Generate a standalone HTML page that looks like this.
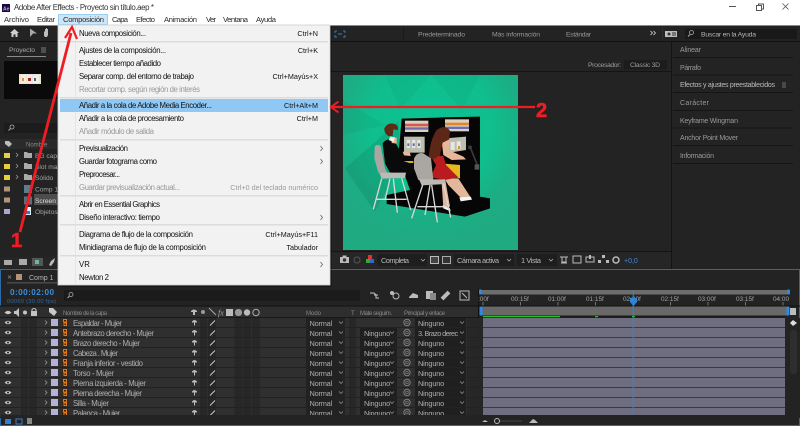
<!DOCTYPE html>
<html lang="es"><head><meta charset="utf-8"><title>Adobe After Effects</title>
<style>
html,body{margin:0;padding:0;width:800px;height:426px;overflow:hidden;background:#1e1e1e}
svg{display:block;filter:blur(.3px)}
text{font-family:"Liberation Sans",sans-serif;font-size:7.8px;fill:#111}
.d{fill:#9a9a9a}
.s{fill:#9a9a9a}
.w{fill:#b8b8b8}
.r{text-anchor:end;font-size:7.2px}
.n{font-size:7.8px;fill:#adadad}
.dd{font-size:7.4px;letter-spacing:-.22px;fill:#adadad}
.h{font-size:6px;fill:#8a8a8a}
.t{font-size:6.6px;fill:#a3a3a3}
.m{font-size:7.6px;fill:#2a2a2a}
.rl{font-size:6.4px;fill:#a5a5a5}
</style></head><body>
<svg width="800" height="426" viewBox="0 0 800 426" xmlns="http://www.w3.org/2000/svg">
<defs>
<g id="row">
<rect x="0" y="0" width="478" height="9" fill="#2f2f2f"/>
<rect x="0" y="9" width="478" height="1" fill="#222"/>
<path d="M4.500 4.500q3.500-3.500 7 0q-3.500 3.500-7 0z" fill="#c8c8c8"/><circle cx="8" cy="4.500" r="1" fill="#222"/>
<rect x="21" y="0" width="7" height="9" fill="#272727"/><rect x="29" y="0" width="8" height="9" fill="#272727"/>
<path d="M45 2.500l2 2-2 2" fill="none" stroke="#9a9a9a" stroke-width=".8"/>
<rect x="51" y="1" width="7" height="7" fill="#b5b0d8"/>
<rect x="62" y="0.500" width="6" height="8" fill="#3a2412"/><path d="M63.500 1.500h3v2.500h-3zM64 5h2.500v2.500H64z" fill="none" stroke="#e07a1c" stroke-width="1"/>
<path d="M192 3.500q2.500-3 5 0v1h-5z M194 4.500h1v3h-1z" fill="#bcbcbc"/>
<rect x="200" y="0" width="7" height="9" fill="#272727"/><rect x="208" y="0" width="8" height="9" fill="#272727"/>
<path d="M210 7.500l5-5" stroke="#cfcfcf" stroke-width=".9"/>
<rect x="234.500" y="0" width="8" height="9" fill="#272727"/><rect x="243" y="0" width="8" height="9" fill="#272727"/><rect x="252" y="0" width="8" height="9" fill="#272727"/>
<rect x="306" y="0" width="39" height="9" fill="#222"/>
<path d="M339 3.500l2 2 2-2" fill="none" stroke="#999" stroke-width=".7"/>
<rect x="349" y="0" width="7" height="9" fill="#272727"/>
<circle cx="407" cy="4.500" r="3.200" fill="none" stroke="#7f7f7f" stroke-width="1"/><circle cx="407" cy="4.500" r="1.300" fill="none" stroke="#7f7f7f" stroke-width=".7"/>
<rect x="415" y="0" width="51" height="9" fill="#1f1f1f"/>
<path d="M460 3.500l2 2 2-2" fill="none" stroke="#999" stroke-width=".7"/>
<rect x="467" y="0" width="11" height="9" fill="#272727"/>
<rect x="478" y="0" width="5" height="10" fill="#262626"/>
<rect x="483" y="0" width="302" height="9" fill="#6f6d80"/>
<rect x="483" y="9" width="302" height="1" fill="#3a3a3f"/>
<rect x="785" y="0" width="15" height="10" fill="#232323"/>
</g>
<g id="mate"><rect x="360" y="0" width="37" height="9" fill="#1f1f1f"/><path d="M390 3.500l2 2 2-2" fill="none" stroke="#999" stroke-width=".7"/></g>
<radialGradient id="bg" gradientUnits="userSpaceOnUse" cx="431" cy="128" r="115">
<stop offset="0" stop-color="#0cc492"/><stop offset=".55" stop-color="#10bd8d"/><stop offset=".8" stop-color="#1cad84"/><stop offset="1" stop-color="#20aa82"/>
</radialGradient>
</defs>

<!-- title bar -->
<rect width="800" height="25" fill="#fff"/>
<rect x="2" y="4" width="8" height="8" fill="#1d0b3d"/>
<text x="3" y="10.500" style="font-size:5px;fill:#b6a5f5;font-weight:bold">Ae</text>
<text x="14" y="10" style="font-size:7.900px;fill:#333" textLength="140">Adobe After Effects - Proyecto sin título.aep *</text>
<path d="M729 6.500h7" stroke="#555" stroke-width="1"/>
<rect x="758.500" y="4" width="5" height="5" fill="none" stroke="#555"/><rect x="756.500" y="5.500" width="5" height="5" fill="#fff" stroke="#555"/>
<path d="M782.500 3.500l6 6m0-6l-6 6" stroke="#555" stroke-width=".8"/>
<rect x="58.500" y="14.500" width="49" height="10" fill="#cde6f7" stroke="#9bcdf0"/>
<text x="4" y="22" class="m" textLength="25">Archivo</text>
<text x="37" y="22" class="m" textLength="18">Editar</text>
<text x="63" y="22" class="m" textLength="41">Composición</text>
<text x="112" y="22" class="m" textLength="16">Capa</text>
<text x="136" y="22" class="m" textLength="19">Efecto</text>
<text x="164" y="22" class="m" textLength="33">Animación</text>
<text x="206" y="22" class="m" textLength="10">Ver</text>
<text x="223" y="22" class="m" textLength="25">Ventana</text>
<text x="256" y="22" class="m" textLength="20">Ayuda</text>

<!-- app -->
<rect x="0" y="25" width="800" height="401" fill="#1b1b1b"/>
<rect x="0" y="25" width="800" height="1" fill="#888"/>
<rect x="0" y="26" width="800" height="15" fill="#232323"/>
<rect x="0" y="41" width="800" height="1" fill="#111"/>
<path d="M10 33l4.500-4 4.500 4h-1.500v4h-2v-2.500h-2V37h-2v-4z" fill="#cfcfcf"/>
<path d="M30 28.500l7 5h-4l-3 3.500z" fill="#a8a8a8"/>
<path d="M44 36v-5l1 1v-3h1v2.500V28h1v2.500V29h1v6l-1 2h-2z" fill="#bdbdbd"/>
<path d="M335 31h2m-2 0v2m8-2h2m0 0v2m-10 2v2h2m6 0h2v-2M338 34h4" stroke="#3b7fbf" stroke-width=".9" fill="none"/>
<rect x="403" y="27" width=".8" height="13" fill="#191919"/>
<text x="418" y="36.500" class="s" textLength="47" style="font-size:6.800px">Predeterminado</text>
<text x="492" y="36.500" class="s" textLength="48" style="font-size:6.800px">Más información</text>
<text x="566" y="36.500" class="s" textLength="25" style="font-size:6.800px">Estándar</text>
<path d="M650.500 31l2 2-2 2m3-4l2 2-2 2" fill="none" stroke="#bbb" stroke-width=".9"/>
<rect x="662" y="27" width=".8" height="12" fill="#333"/>
<rect x="665" y="31" width="12" height="6" fill="#bdbdbd"/><circle cx="669" cy="34" r="1.500" fill="#333"/><rect x="672" y="32.500" width="4" height="1" fill="#333"/><rect x="672" y="34.500" width="4" height="1" fill="#333"/>
<rect x="685" y="29" width="112" height="10" fill="#191919"/>
<circle cx="691.500" cy="32.500" r="2" fill="none" stroke="#aaa" stroke-width=".8"/><path d="M690 34.500l-2 2" stroke="#aaa"/>
<text x="701" y="36.500" class="w" textLength="55" style="font-size:6.800px">Buscar en la Ayuda</text>

<!-- project panel -->
<rect x="0" y="42" width="58" height="227" fill="#232323"/>
<text x="9" y="52" textLength="26" style="font-size:6.800px;fill:#a5a5a5">Proyecto</text>
<path d="M41 48h5m-5 2h5m-5 2h5" stroke="#999" stroke-width=".8"/>
<rect x="7" y="56" width="39" height="1" fill="#8a8a8a"/>
<rect x="4" y="61" width="54" height="38" fill="#0a0a0a"/>
<rect x="19" y="74" width="22" height="10" fill="#e8e4d8"/>
<rect x="21" y="75" width="5" height="8" fill="#f4f0e0"/><rect x="27" y="75" width="5" height="8" fill="#f3ede0"/><rect x="33" y="75" width="6" height="8" fill="#f4f0e0"/>
<rect x="22" y="78" width="2" height="3" fill="#d99828"/><rect x="28" y="78" width="3" height="3" fill="#a8231f"/><rect x="34" y="78" width="2" height="3" fill="#4a5aa0"/>
<rect x="4" y="123" width="54" height="10" fill="#1c1c1c"/>
<circle cx="12" cy="127" r="2" fill="none" stroke="#aaa" stroke-width=".8"/><path d="M10.500 128.500l-2 2" stroke="#aaa"/>
<rect x="0" y="139" width="58" height="10" fill="#2b2b2b"/>
<path d="M5 141h4l3 3-3 3-4-3z" fill="#bdbdbd"/>
<text x="26" y="146.500" class="h">Nombre</text>
<rect x="4" y="153" width="6" height="5" fill="#e6cf3c"/><rect x="4" y="164" width="6" height="5" fill="#e6cf3c"/><rect x="4" y="175" width="6" height="5" fill="#e6cf3c"/>
<rect x="4" y="186.500" width="6" height="5" fill="#b0957a"/><rect x="4" y="197.500" width="6" height="5" fill="#b0957a"/><rect x="4" y="209" width="6" height="5" fill="#a9a5d4"/>
<path d="M16 153l2 2-2 2M16 164l2 2-2 2M16 175l2 2-2 2" fill="none" stroke="#999" stroke-width=".8"/>
<path d="M24 152h3l1 1h4v5h-8z M24 163h3l1 1h4v5h-8z M24 174h3l1 1h4v5h-8z" fill="#aaa"/>
<rect x="34" y="194" width="24" height="11" fill="#4d4d4d"/>
<rect x="24" y="185" width="8" height="8" fill="#5a7d90"/><rect x="24" y="196.500" width="8" height="8" fill="#5a6d7c"/>
<rect x="25" y="207" width="6" height="8" fill="#e8eef4"/><rect x="26" y="211" width="4" height="3" fill="#2d78c8"/>
<text x="35" y="158" class="t">BG capa</text><text x="35" y="169" class="t">Slot ma</text><text x="35" y="180" class="t">Sólido</text><text x="35" y="191.500" class="t">Comp 1</text><text x="35" y="203" class="t" style="fill:#ddd">Screen</text><text x="35" y="214" class="t">Objetos</text>
<rect x="0" y="257" width="58" height="11" fill="#262626"/>
<rect x="4" y="260" width="8" height="5" fill="#aaa"/><rect x="19" y="259" width="8" height="6" fill="#aaa"/><rect x="32" y="258" width="11" height="8" fill="#555"/><rect x="35" y="260" width="4" height="4" fill="#6b9"/>
<path d="M49 265l2-4 4-3-1 4-3 4z" fill="#bbb"/>

<!-- viewer panel -->
<rect x="330" y="42" width="341" height="227" fill="#232323"/>
<rect x="330" y="71" width="341" height="1" fill="#141414"/>
<text x="588" y="67" class="s" textLength="33" style="font-size:6.800px">Procesador:</text>
<rect x="624" y="60" width="43" height="9.500" fill="#1c1c1c"/>
<text x="630" y="67" class="s" textLength="30" style="font-size:6.800px">Classic 3D</text>

<!-- composition -->
<rect x="343" y="75" width="175" height="175" fill="url(#bg)"/>
<path d="M431 75L385 75L400 110ZM431 75L480 75L462 110ZM343 100L343 135L385 125Z" fill="#000" opacity=".035"/>
<g transform="translate(330 100) scale(.33333)">
<path d="M45 205L205 65L215 190L135 335Z" fill="#0b5a45" opacity=".16"/>
<!-- machine -->
<path d="M215 56L325 53L332 52L450 50V290L480 295V325L405 350L170 312V285L240 270L205 170Z" fill="#060606"/>
<rect x="225" y="62" width="70" height="34" fill="#ddd0bc"/><rect x="225" y="71" width="70" height="8" fill="#d35a4a"/><rect x="225" y="82" width="70" height="7" fill="#6a6fb0"/>
<rect x="345" y="58" width="72" height="36" fill="#ddd0bc"/><rect x="345" y="68" width="72" height="8" fill="#e0862c"/><rect x="345" y="80" width="72" height="7" fill="#6a6fb0"/>
<rect x="222" y="110" width="62" height="48" fill="#bdbdb0"/><rect x="230" y="120" width="10" height="24" fill="#e6e6e6"/><rect x="246" y="120" width="10" height="24" fill="#e6e6e6"/><rect x="262" y="120" width="10" height="24" fill="#e6e6e6"/>
<rect x="232" y="130" width="6" height="8" fill="#5a70a8"/><rect x="248" y="130" width="6" height="8" fill="#5a70a8"/><rect x="264" y="130" width="6" height="8" fill="#5a70a8"/>
<path d="M345 115L408 110V150L345 160Z" fill="#bdbdb0"/><rect x="362" y="126" width="12" height="24" fill="#e6e6e6"/><rect x="380" y="124" width="12" height="24" fill="#e6e6e6"/><rect x="384" y="138" width="6" height="9" fill="#d49a20"/>
<path d="M335 190L390 195V235L345 225Z" fill="#e5b81f"/>
<path d="M210 183h40v6h-40z" fill="#d8b020"/>
<path d="M420 140L442 195" stroke="#3a3a3a" stroke-width="5"/><circle cx="420" cy="142" r="6" fill="#3a3a3a"/><rect x="434" y="193" width="14" height="16" fill="#555"/>
<!-- man -->
<path d="M158 130Q168 114 190 118L212 155L245 163L240 172L212 180L255 195L250 225L180 218L165 190Z" fill="#0a0a0a"/>
<path d="M185 113h15v18l-15-2z" fill="#e8b79a"/><path d="M181 110L176 120L190 126L195 112Z" fill="#f2f2f2"/>
<path d="M163 85Q172 66 195 72Q207 78 203 90L190 88L188 108L175 108Q162 100 163 85Z" fill="#5c2c17"/>
<path d="M218 155l22 3 2 10-20-2z" fill="#e8b79a"/>
<path d="M134 140Q140 130 152 138L165 205L172 220L145 218L133 175Z" fill="#aaa6a2"/>
<path d="M148 218H228L225 234L155 236Z" fill="#bdbab6"/>
<path d="M155 236L130 328M180 236L165 300M190 236L202 338M215 234L242 330M140 298H230" stroke="#d8d8d8" stroke-width="4" fill="none"/>
<!-- woman -->
<path d="M335 125L360 120L355 150L400 170L408 178L365 180L340 165Z" fill="#e8b79a"/>
<path d="M343 235L385 235L422 292L395 296L355 255Z" fill="#e3b79c"/>
<path d="M345 235L360 320L340 322L335 250Z" fill="#e3b79c"/>
<path d="M388 292L422 290L426 299L392 304Z" fill="#f4f4f4"/><path d="M338 315L360 325L362 334L340 325Z" fill="#f4f4f4"/>
<path d="M300 165L340 168L348 195L385 232L345 240L302 232L318 195Z" fill="#b81c1f"/>
<path d="M296 172Q300 120 320 90Q345 72 360 92L358 118L338 128L330 165L310 178Z" fill="#5c2717"/>
<path d="M252 175Q262 155 280 160L303 175L310 240L265 240L252 205Z" fill="#aaa6a2"/>
<path d="M267 238H345L348 252L275 256Z" fill="#bdbab6"/>
<path d="M278 255L245 355M300 255L285 345M305 255L322 367M340 250L362 352M262 320H350" stroke="#d8d8d8" stroke-width="4" fill="none"/>
</g>

<!-- viewer bar -->
<rect x="330" y="252" width="341" height="16" fill="#262626"/>
<rect x="330" y="251" width="341" height="1" fill="#151515"/>
<rect x="340" y="257" width="9" height="6" fill="#bbb"/><circle cx="344.500" cy="260" r="1.700" fill="#333"/><rect x="342.500" y="255.500" width="4" height="2" fill="#bbb"/>
<circle cx="357" cy="260" r="3" fill="none" stroke="#4c4c4c" stroke-width="1.300"/>
<rect x="368" y="255" width="4" height="4" fill="#d33"/><rect x="366" y="259" width="4" height="4" fill="#3a3"/><rect x="370" y="259" width="4" height="4" fill="#36c"/>
<rect x="377" y="254" width="50" height="12" fill="#1e1e1e"/>
<text x="381" y="263" class="w" textLength="28" style="font-size:7.400px">Completa</text>
<path d="M421 259l2 2 2-2" fill="none" stroke="#aaa" stroke-width=".8"/>
<rect x="430.500" y="256.500" width="8" height="7" fill="#444" stroke="#bbb"/><rect x="442.500" y="256.500" width="8" height="7" fill="#333" stroke="#aaa"/>
<rect x="454" y="254" width="60" height="12" fill="#1e1e1e"/>
<text x="457" y="263" class="w" textLength="42" style="font-size:7.400px">Cámara activa</text>
<path d="M507 259l2 2 2-2" fill="none" stroke="#aaa" stroke-width=".8"/>
<rect x="517" y="254" width="40" height="12" fill="#1e1e1e"/>
<text x="521" y="263" class="w" textLength="20" style="font-size:7.400px">1 Vista</text>
<path d="M549 259l2 2 2-2" fill="none" stroke="#aaa" stroke-width=".8"/>
<path d="M560 257h8m-6 0v5h4v-5M561 263h6" stroke="#bbb" fill="none"/>
<rect x="573" y="256" width="8" height="7" fill="none" stroke="#bbb"/>
<rect x="586" y="257" width="8" height="5" fill="none" stroke="#bbb"/><rect x="589" y="255" width="2" height="4" fill="#bbb"/>
<path d="M602 255h3v3h-3zM598 260h3v3h-3zM606 260h3v3h-3z" fill="#bbb"/>
<circle cx="616" cy="260" r="3" fill="none" stroke="#bbb" stroke-width="1.500"/>
<text x="624" y="263" style="font-size:7px;fill:#3e8ad6">+0,0</text>

<!-- right panel -->
<rect x="672" y="42" width="128" height="227" fill="#232323"/>
<rect x="671" y="42" width="1" height="227" fill="#141414"/>
<g fill="#151515">
<rect x="673" y="57" width="120" height="1"/><rect x="673" y="74.500" width="120" height="1"/><rect x="673" y="92" width="120" height="1"/><rect x="673" y="110" width="120" height="1"/><rect x="673" y="127.500" width="120" height="1"/><rect x="673" y="145" width="120" height="1"/><rect x="673" y="163" width="120" height="1"/>
</g>
<text x="680" y="52" class="s" textLength="21" style="font-size:7px">Alinear</text>
<text x="680" y="70" class="s" textLength="21" style="font-size:7px">Párrafo</text>
<text x="680" y="87" textLength="95" style="font-size:7px;fill:#bcbcbc">Efectos y ajustes preestablecidos</text>
<path d="M782 83h4m-4 2h4m-4 2h4" stroke="#888" stroke-width=".8"/>
<text x="680" y="105" class="s" textLength="29" style="font-size:7px">Carácter</text>
<text x="680" y="123" class="s" textLength="58" style="font-size:7px">Keyframe Wingman</text>
<text x="680" y="140" class="s" textLength="58" style="font-size:7px">Anchor Point Mover</text>
<text x="680" y="158" class="s" textLength="34" style="font-size:7px">Información</text>

<!-- timeline panel -->
<rect x="0" y="269" width="800" height="157" fill="#232323"/>
<rect x=".5" y="269.500" width="799" height="156" fill="none" stroke="#2a6aa6"/>
<path d="M8 275.500l3 3m0-3l-3 3" stroke="#888" stroke-width=".7"/>
<rect x="16" y="274" width="6" height="6" fill="#b0957a"/>
<text x="29" y="280" class="w" style="font-size:7px">Comp 1</text>
<rect x="7" y="282.500" width="50" height=".8" fill="#6a6a6a"/>
<text x="10" y="295" style="font-size:8.200px;fill:#3b8fdc;font-weight:bold" textLength="44">0:00:02:00</text>
<text x="7" y="303" style="font-size:5.800px;fill:#2d67a0" textLength="49">00060 (30.00 fps)</text>
<rect x="64" y="290" width="296" height="11" fill="#1b1b1b"/>
<circle cx="71" cy="294.500" r="2" fill="none" stroke="#aaa" stroke-width=".8"/><path d="M69.500 296l-2 2" stroke="#aaa"/>
<path d="M370 293h4l2 2v3h3M374 295h4" stroke="#c8c8c8" fill="none" stroke-width="1"/>
<circle cx="392" cy="293" r="2" fill="#bbb"/><circle cx="396" cy="296" r="3" fill="none" stroke="#bbb"/>
<path d="M409 297l4-4 5 2v3h-9z" fill="#bbb"/>
<rect x="426" y="291" width="7" height="8" fill="#bbb"/><rect x="430" y="293" width="6" height="7" fill="#888"/>
<path d="M442 299l7-7" stroke="#bbb" stroke-width="4"/>
<rect x="460" y="291" width="9" height="9" fill="none" stroke="#bbb"/><path d="M462 293l5 5" stroke="#bbb"/>

<!-- ruler -->
<rect x="478" y="289" width="1" height="126" fill="#111"/>
<rect x="482" y="290" width="305" height="4.500" fill="#6d6d6d"/>
<rect x="479" y="289.500" width="3" height="5" rx="1" fill="#2a8bea"/><rect x="787" y="289.500" width="3" height="5" rx="1" fill="#2a8bea"/>
<text x="478" y="301" class="rl">:00f</text>
<text x="511" y="301" class="rl">00:15f</text>
<text x="548" y="301" class="rl">01:00f</text>
<text x="586" y="301" class="rl">01:15f</text>
<text x="623" y="301" class="rl">02:00f</text>
<text x="661" y="301" class="rl">02:15f</text>
<text x="698" y="301" class="rl">03:00f</text>
<text x="736" y="301" class="rl">03:15f</text>
<text x="773" y="301" class="rl">04:00</text>
<path d="M483 302v4M520.500 302v4M558 302v4M595.500 302v4M670.500 302v4M708 302v4M745.500 302v4M783 302v4" stroke="#888" stroke-width=".8"/>

<!-- header -->
<rect x="0" y="306" width="478" height="11" fill="#2e2e2e"/>
<rect x="0" y="305.500" width="800" height="1" fill="#111"/>
<rect x="0" y="317" width="478" height="1" fill="#181818"/>
<path d="M4.500 312.500q3.500-3.500 7 0q-3.500 3.500-7 0z" fill="#c8c8c8"/>
<path d="M14 311h2l3-3v9l-3-3h-2z" fill="#c4c4c4"/>
<circle cx="25" cy="312.500" r="2" fill="#c4c4c4"/>
<rect x="31" y="311" width="6" height="5" fill="#c4c4c4"/><path d="M32 311v-1.500q2-2 4 0V311" fill="none" stroke="#c4c4c4"/>
<path d="M49 308h4l4 4-3 4-5-4z" fill="#c8c8c8"/>
<text x="63" y="315" class="h" textLength="44">Nombre de la capa</text>
<path d="M191 311q3-3 6 0v1h-6zM193 312h2v3h-2z" fill="#bbb"/><circle cx="203" cy="312" r="2" fill="#999"/>
<path d="M209 308l7 7" stroke="#aaa"/>
<text x="218" y="315.500" style="font-size:8px;fill:#aaa;font-style:italic;font-family:'Liberation Serif',serif">fx</text>
<rect x="226" y="309" width="7" height="7" fill="#bbb"/><rect x="235" y="309" width="7" height="7" rx="3" fill="#999"/><circle cx="247" cy="312.500" r="3.200" fill="#bbb"/><circle cx="256" cy="312.500" r="3.200" fill="none" stroke="#aaa"/>
<text x="306" y="315" class="h">Modo</text>
<text x="351" y="315" class="h">T</text>
<text x="360" y="315" class="h" textLength="32">Mate seguim.</text>
<text x="404" y="315" class="h" textLength="41">Principal y enlace</text>

<rect x="482" y="306.500" width="305" height="9" fill="#696969"/>
<rect x="479.500" y="306.500" width="3" height="9" rx="1" fill="#2a8bea"/><rect x="786.500" y="306.500" width="3" height="9" rx="1" fill="#2a8bea"/>
<rect x="483" y="315.500" width="302" height="2" fill="#1b1b1b"/>
<rect x="483" y="316" width="77" height="1.200" fill="#27c22d"/><rect x="595" y="316" width="3" height="1.200" fill="#27c22d"/><rect x="632" y="316" width="3" height="1.200" fill="#27c22d"/>

<!-- rows -->
<use href="#row" y="318"/><use href="#row" y="328"/><use href="#row" y="338"/><use href="#row" y="348"/><use href="#row" y="358"/><use href="#row" y="368"/><use href="#row" y="378"/><use href="#row" y="388"/><use href="#row" y="398"/><use href="#row" y="408"/>
<use href="#mate" y="328"/><use href="#mate" y="338"/><use href="#mate" y="348"/><use href="#mate" y="358"/><use href="#mate" y="368"/><use href="#mate" y="378"/><use href="#mate" y="388"/><use href="#mate" y="398"/><use href="#mate" y="408"/>
<text x="73" y="326" class="n" textLength="49">Espaldar - Mujer</text>
<text x="73" y="336" class="n" textLength="81">Antebrazo derecho - Mujer</text>
<text x="73" y="346" class="n" textLength="67">Brazo derecho - Mujer</text>
<text x="73" y="356" class="n" textLength="45">Cabeza . Mujer</text>
<text x="73" y="366" class="n" textLength="70">Franja inferior - vestido</text>
<text x="73" y="376" class="n" textLength="41">Torso - Mujer</text>
<text x="73" y="386" class="n" textLength="73">Pierna izquierda - Mujer</text>
<text x="73" y="396" class="n" textLength="69">Pierna derecha - Mujer</text>
<text x="73" y="406" class="n" textLength="36">Silla - Mujer</text>
<text x="73" y="416" class="n" textLength="47">Palanca - Mujer</text>
<text x="309.500" y="326" class="dd">Normal</text><text x="309.500" y="336" class="dd">Normal</text><text x="309.500" y="346" class="dd">Normal</text><text x="309.500" y="356" class="dd">Normal</text><text x="309.500" y="366" class="dd">Normal</text><text x="309.500" y="376" class="dd">Normal</text><text x="309.500" y="386" class="dd">Normal</text><text x="309.500" y="396" class="dd">Normal</text><text x="309.500" y="406" class="dd">Normal</text><text x="309.500" y="416" class="dd">Normal</text>
<text x="364" y="336" class="dd">Ninguno</text><text x="364" y="346" class="dd">Ninguno</text><text x="364" y="356" class="dd">Ninguno</text><text x="364" y="366" class="dd">Ninguno</text><text x="364" y="376" class="dd">Ninguno</text><text x="364" y="386" class="dd">Ninguno</text><text x="364" y="396" class="dd">Ninguno</text><text x="364" y="406" class="dd">Ninguno</text><text x="364" y="416" class="dd">Ninguno</text>
<text x="418" y="326" class="dd">Ninguno</text><text x="418" y="336" class="dd" textLength="40">3. Brazo derec</text><text x="418" y="346" class="dd">Ninguno</text><text x="418" y="356" class="dd">Ninguno</text><text x="418" y="366" class="dd">Ninguno</text><text x="418" y="376" class="dd">Ninguno</text><text x="418" y="386" class="dd">Ninguno</text><text x="418" y="396" class="dd">Ninguno</text><text x="418" y="406" class="dd">Ninguno</text><text x="418" y="416" class="dd">Ninguno</text>

<rect x="790" y="308" width="6" height="7" fill="#bbb"/>
<path d="M790 323l3-3 4 3-4 3z" fill="#ddd"/>
<rect x="790" y="330" width="7" height="44" rx="3" fill="#2e2e2e"/>

<!-- playhead -->
<rect x="632.700" y="290" width="1" height="128" fill="#2f84d8"/>
<path d="M630 298h7v4l-3.500 4-3.500-4z" fill="#2f84d8"/>

<!-- bottom bar -->
<rect x="1" y="415" width="798" height="10" fill="#232323"/>
<rect x="5" y="419" width="6" height="5" fill="#3a7fc4"/><rect x="16" y="419" width="6" height="5" fill="none" stroke="#3a7fc4"/><rect x="27" y="418" width="5" height="6" fill="#888"/>
<path d="M482 422l3-2 3 2z" fill="#bbb"/><circle cx="497" cy="421" r="2.500" fill="none" stroke="#bbb"/><rect x="500" y="420.500" width="22" height="1" fill="#444"/>
<path d="M529 423l4-4 2 1 3 3z" fill="#bbb"/>

<!-- menu -->
<rect x="59" y="26" width="273" height="261" fill="#000" opacity=".25"/>
<rect x="58" y="25" width="272" height="260" fill="#f2f2f2"/>
<rect x="58" y="25" width="272" height="260" fill="none" stroke="#cfcfcf" stroke-width=".8"/>
<rect x="75" y="26" width=".8" height="258" fill="#e2e2e2"/>
<rect x="60" y="99" width="268" height="13" fill="#90c8f5"/>
<g fill="#dcdcdc">
<rect x="60" y="41" width="268" height="1.500"/><rect x="60" y="97" width="268" height="1.500"/><rect x="60" y="139" width="268" height="1.500"/><rect x="60" y="195" width="268" height="1.500"/><rect x="60" y="224" width="268" height="1.500"/><rect x="60" y="255" width="268" height="1.500"/>
</g>
<text x="79" y="36" textLength="67">Nueva composición...</text><text x="318" y="36" class="r">Ctrl+N</text>
<text x="79" y="53" textLength="87">Ajustes de la composición...</text><text x="318" y="53" class="r">Ctrl+K</text>
<text x="79" y="66" textLength="82">Establecer tiempo añadido</text>
<text x="79" y="79" textLength="115">Separar comp. del entorno de trabajo</text><text x="318" y="79" class="r">Ctrl+Mayús+X</text>
<text x="79" y="92" class="d" textLength="121">Recortar comp. según región de interés</text>
<text x="79" y="108" textLength="133">Añadir a la cola de Adobe Media Encoder...</text><text x="318" y="108" class="r">Ctrl+Alt+M</text>
<text x="79" y="121" textLength="105">Añadir a la cola de procesamiento</text><text x="318" y="121" class="r">Ctrl+M</text>
<text x="79" y="134" class="d" textLength="75">Añadir módulo de salida</text>
<text x="79" y="151" textLength="49">Previsualización</text>
<text x="79" y="164" textLength="78">Guardar fotograma como</text>
<text x="79" y="177" textLength="41">Preprocesar...</text>
<text x="79" y="190" class="d" textLength="101">Guardar previsualización actual...</text><text x="318" y="190" class="d r">Ctrl+0 del teclado numérico</text>
<text x="79" y="207" textLength="81">Abrir en Essential Graphics</text>
<text x="79" y="220" textLength="81">Diseño interactivo: tiempo</text>
<text x="79" y="237" textLength="114">Diagrama de flujo de la composición</text><text x="318" y="237" class="r">Ctrl+Mayús+F11</text>
<text x="79" y="250" textLength="127">Minidiagrama de flujo de la composición</text><text x="318" y="250" class="r">Tabulador</text>
<text x="79" y="267">VR</text>
<text x="79" y="280" textLength="30">Newton 2</text>
<path d="M320.500 146l2 2.500-2 2.500M320.500 159l2 2.500-2 2.500M320.500 215l2 2.500-2 2.500M320.500 262l2 2.500-2 2.500" fill="none" stroke="#666" stroke-width=".8"/>

<!-- red annotations -->
<path d="M20 232L71 33" stroke="#f01c24" stroke-width="2.800" fill="none"/>
<path d="M65 38L72 27L77 39" stroke="#f01c24" stroke-width="2.200" fill="none"/>
<text x="11" y="247" style="font-size:20px;font-weight:bold;fill:#f01c24;stroke:#f01c24;stroke-width:.6px">1</text>
<path d="M333 107H535" stroke="#f01c24" stroke-width="2.200"/>
<path d="M338.500 101.500L331 107L338.500 112.500" stroke="#f01c24" stroke-width="2" fill="none"/>
<text x="536" y="117" style="font-size:20px;font-weight:bold;fill:#f01c24;stroke:#f01c24;stroke-width:.6px">2</text>
</svg>
</body></html>
